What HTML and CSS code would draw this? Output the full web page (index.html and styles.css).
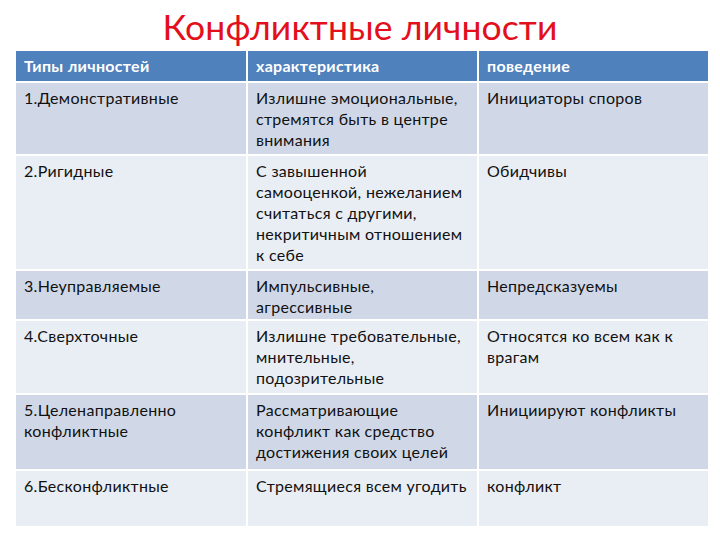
FILE: index.html
```html
<!DOCTYPE html>
<html lang="ru">
<head>
<meta charset="utf-8">
<title>Конфликтные личности</title>
<link rel="stylesheet" href="styles.css">
</head>
<body>
<div class="slide">
  <h1 class="title">Конфликтные личности</h1>
  <div class="table">
    <div class="cell head">Типы личностей</div>
    <div class="cell head">характеристика</div>
    <div class="cell head">поведение</div>

    <div class="cell odd">1.Демонстративные</div>
    <div class="cell odd">Излишне эмоциональные,<br>стремятся быть в центре<br>внимания</div>
    <div class="cell odd">Инициаторы споров</div>

    <div class="cell even">2.Ригидные</div>
    <div class="cell even">С завышенной<br>самооценкой, нежеланием<br>считаться с другими,<br>некритичным отношением<br>к себе</div>
    <div class="cell even">Обидчивы</div>

    <div class="cell odd">3.Неуправляемые</div>
    <div class="cell odd">Импульсивные,<br>агрессивные</div>
    <div class="cell odd">Непредсказуемы</div>

    <div class="cell even">4.Сверхточные</div>
    <div class="cell even">Излишне требовательные,<br>мнительные,<br>подозрительные</div>
    <div class="cell even">Относятся ко всем как к<br>врагам</div>

    <div class="cell odd">5.Целенаправленно<br>конфликтные</div>
    <div class="cell odd">Рассматривающие<br>конфликт как средство<br>достижения своих целей</div>
    <div class="cell odd">Инициируют конфликты</div>

    <div class="cell even">6.Бесконфликтные</div>
    <div class="cell even">Стремящиеся всем угодить</div>
    <div class="cell even">конфликт</div>
  </div>
</div>
</body>
</html>
```
FILE: styles.css
```css
html, body {
  margin: 0;
  padding: 0;
  background: #ffffff;
}
.slide {
  width: 720px;
  height: 540px;
  overflow: hidden;
  font-family: Lato, "Open Sans", "Liberation Sans", sans-serif;
}
.title {
  margin: 0;
  height: 51px;
  line-height: 54px;
  text-align: center;
  font-weight: 400;
  font-size: 35.5px;
  color: #e3101c;
  letter-spacing: 0.1px;
}
.table {
  margin-left: 16px;
  width: 692px;
  display: grid;
  grid-template-columns: 230px 229px 229px;
  grid-template-rows: 30px 71px 113px 48px 72px 74px 55px;
  column-gap: 2px;
  row-gap: 2px;
}
.cell {
  padding: 4px 4px 0 8px;
  font-size: 16px;
  line-height: 21px;
  letter-spacing: 0.3px;
  white-space: nowrap;
  color: #111111;
}
.head {
  background: #4f81bd;
  color: #ffffff;
  font-weight: 700;
  padding-top: 4px;
}
.odd {
  background: #d0d8e8;
}
.even {
  background: #e9edf4;
}
```
